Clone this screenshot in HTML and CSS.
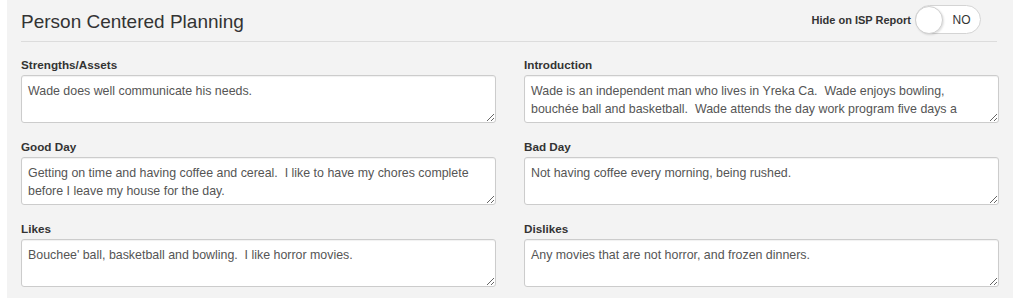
FILE: index.html
```html
<!DOCTYPE html>
<html lang="en">
<head>
    <meta charset="UTF-8">
    <meta name="viewport" content="width=device-width, initial-scale=1.0">
    <title>Person Centered Planning</title>
    <link rel="stylesheet" href="styles.css">
</head>
<body>
    <div class="panel">
        <div class="panel-header">
            <h2>Person Centered Planning</h2>
            <div class="hide-toggle">
                <span class="toggle-label">Hide on ISP Report</span>
                <div class="switch">
                    <span class="knob"></span>
                    <span class="switch-text">NO</span>
                </div>
            </div>
        </div>

        <div class="fields">
            <div class="field">
                <label>Strengths/Assets</label>
                <textarea>Wade does well communicate his needs.</textarea>
            </div>
            <div class="field">
                <label>Introduction</label>
                <textarea>Wade is an independent man who lives in Yreka Ca.  Wade enjoys bowling, bouchée ball and basketball.  Wade attends the day work program five days a week.</textarea>
            </div>
            <div class="field">
                <label>Good Day</label>
                <textarea>Getting on time and having coffee and cereal.  I like to have my chores complete before I leave my house for the day.</textarea>
            </div>
            <div class="field">
                <label>Bad Day</label>
                <textarea>Not having coffee every morning, being rushed.</textarea>
            </div>
            <div class="field">
                <label>Likes</label>
                <textarea>Bouchee' ball, basketball and bowling.  I like horror movies.</textarea>
            </div>
            <div class="field">
                <label>Dislikes</label>
                <textarea>Any movies that are not horror, and frozen dinners.</textarea>
            </div>
        </div>
    </div>
</body>
</html>
```

FILE: styles.css
```css
body {
    margin: 0;
    background-color: #fff;
    font-family: "Liberation Sans", Arial, sans-serif;
    color: #333;
}
.panel {
    margin-left: 7px;
    width: 1006px;
    height: 298px;
    box-sizing: border-box;
    padding: 0 14px 0 14px;
    background-color: #f3f3f3;
}
.panel-header {
    display: flex;
    justify-content: space-between;
    align-items: center;
    height: 41px;
    border-bottom: 1px solid #dcdcdc;
    margin-right: 2px;
}
.panel-header h2 {
    margin: 0;
    font-size: 19px;
    font-weight: normal;
    color: #333;
    padding-top: 2px;
}
.hide-toggle {
    display: flex;
    align-items: center;
    margin-right: 16px;
    padding-bottom: 2px;
}
.toggle-label {
    font-size: 11px;
    font-weight: bold;
    color: #333;
    margin-right: 4px;
}
.switch {
    display: flex;
    align-items: center;
    width: 66px;
    height: 29px;
    box-sizing: border-box;
    border: 1px solid #d4d4d4;
    border-radius: 15px;
    background-color: #fff;
}
.knob {
    width: 28px;
    height: 28px;
    box-sizing: border-box;
    margin-left: -1px;
    border: 1px solid #d0d0d0;
    border-radius: 50%;
    background-color: #fff;
    box-shadow: 1px 1px 2px rgba(0, 0, 0, 0.12);
}
.switch-text {
    flex: 1;
    text-align: center;
    font-size: 12px;
    color: #333;
}
.fields {
    display: grid;
    grid-template-columns: 475px 475px;
    column-gap: 28px;
    padding-top: 16px;
}
.field {
    display: flex;
    flex-direction: column;
    height: 82px;
}
.field label {
    font-size: 11.7px;
    font-weight: bold;
    color: #333;
    line-height: 13px;
    margin-bottom: 4px;
}
.field textarea {
    height: 48px;
    box-sizing: border-box;
    padding: 6px 6px;
    border: 1px solid #ccc;
    border-radius: 3px;
    box-shadow: inset 0 1px 1px rgba(0, 0, 0, 0.06);
    background-color: #fff;
    font-family: "Liberation Sans", Arial, sans-serif;
    font-size: 12.4px;
    line-height: 18px;
    color: #555;
    overflow: hidden;
    resize: vertical;
}
```
